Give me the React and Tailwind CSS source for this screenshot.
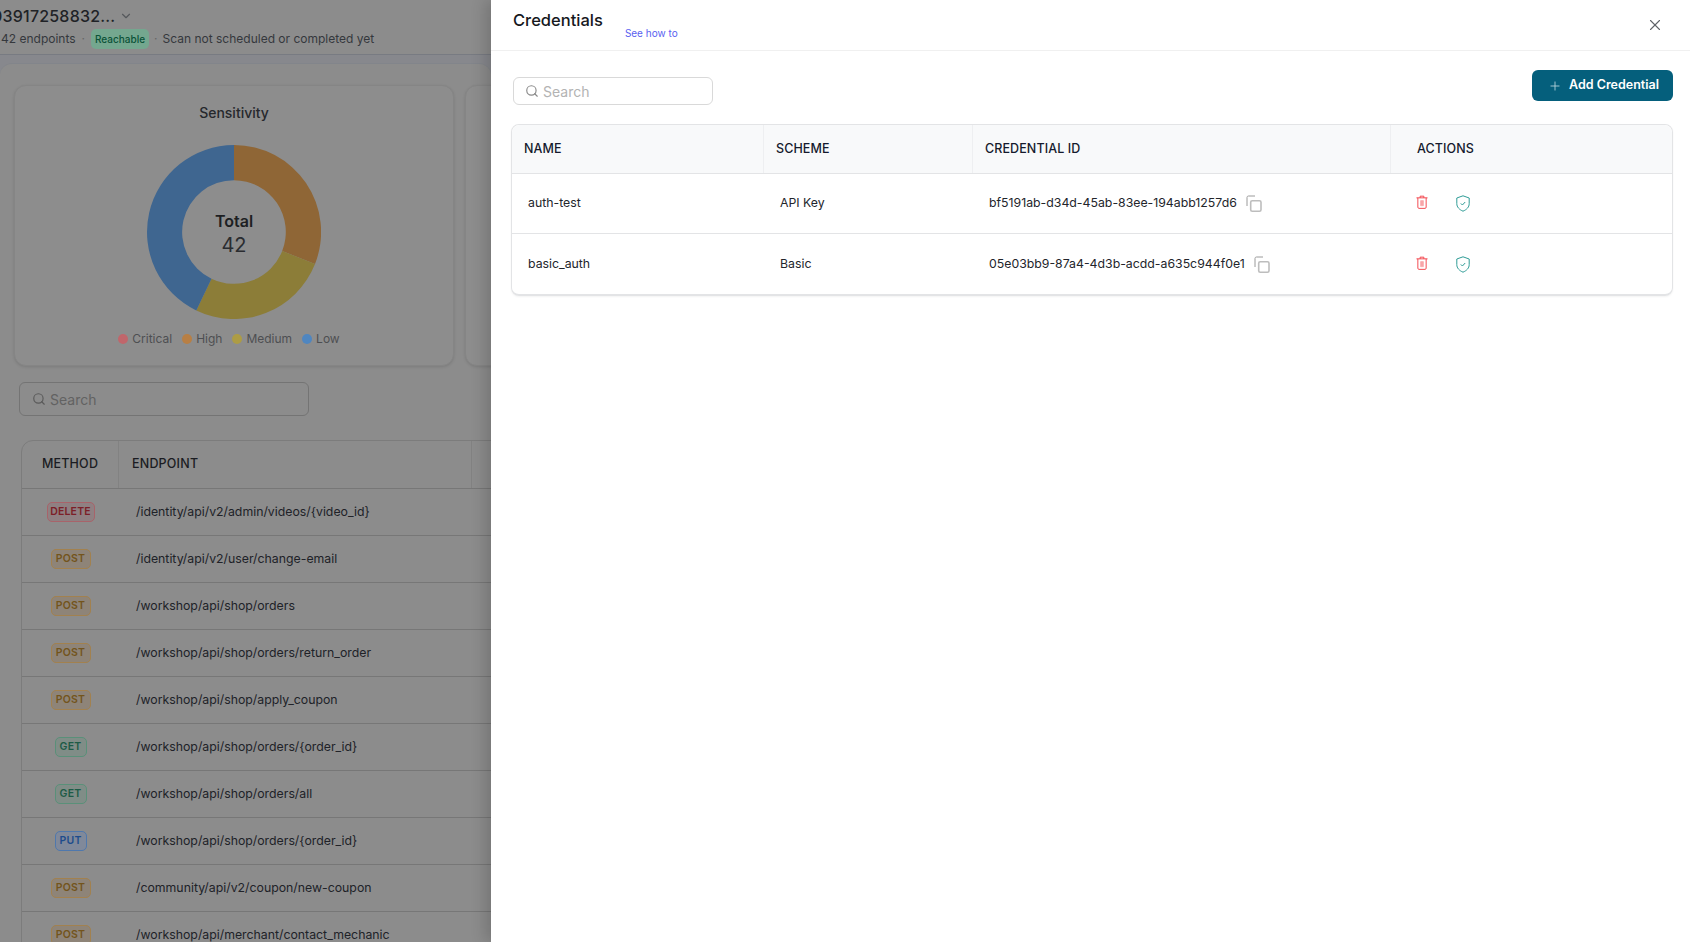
import { ChevronDown, Plus, Search, X } from 'lucide-react'

const ENDPOINTS = [
  ['DELETE', '/identity/api/v2/admin/videos/{video_id}'],
  ['POST', '/identity/api/v2/user/change-email'],
  ['POST', '/workshop/api/shop/orders'],
  ['POST', '/workshop/api/shop/orders/return_order'],
  ['POST', '/workshop/api/shop/apply_coupon'],
  ['GET', '/workshop/api/shop/orders/{order_id}'],
  ['GET', '/workshop/api/shop/orders/all'],
  ['PUT', '/workshop/api/shop/orders/{order_id}'],
  ['POST', '/community/api/v2/coupon/new-coupon'],
  ['POST', '/workshop/api/merchant/contact_mechanic'],
]

const METHOD_STYLES = {
  DELETE: 'w-12 border-[#a8636a] bg-[#8f8082] text-[#7c1f28]',
  POST: 'w-10 border-[#a2814f] bg-[#8e8478] text-[#73541c]',
  GET: 'w-8 border-[#5a9079] bg-[#808d87] text-[#1d5b46]',
  PUT: 'w-8 border-[#4f78ad] bg-[#80899a] text-[#1d4c8c]',
}

const LEGEND = [
  ['Critical', 'bg-[#c0666b]'],
  ['High', 'bg-[#b87f44]'],
  ['Medium', 'bg-[#ad9c44]'],
  ['Low', 'bg-[#4f86c0]'],
]

const CREDENTIALS = [
  ['auth-test', 'API Key', 'bf5191ab-d34d-45ab-83ee-194abb1257d6'],
  ['basic_auth', 'Basic', '05e03bb9-87a4-4d3b-acdd-a635c944f0e1'],
]

function Donut() {
  return (
    <svg width="174" height="174" viewBox="-87 -87 174 174">
      <path d="M0 -87A87 87 0 0 1 81 32L48.2 19A51.8 51.8 0 0 0 0 -51.8Z" fill="#8f6636" />
      <path d="M81 32A87 87 0 0 1 -37.7 78.4L-22.5 46.7A51.8 51.8 0 0 0 48.2 19Z" fill="#8c7d38" />
      <path d="M-37.7 78.4A87 87 0 0 1 0 -87L0 -51.8A51.8 51.8 0 0 0 -22.5 46.7Z" fill="#3f6690" />
    </svg>
  )
}

function ShieldCheck() {
  return (
    <svg width="14" height="17" viewBox="0 0 14 17" fill="none" stroke="#2f9c96" strokeWidth="1">
      <path d="M7 .8 13.200 3v5.600c0 3.600-2.600 6-6.200 7.600C3.400 14.600.8 12.200.8 8.600V3Z" />
      <path d="M4.800 8.400 6.400 10l2.800-3" />
    </svg>
  )
}

function TrashIcon() {
  return (
    <svg width="12" height="14" viewBox="0 0 13 15" fill="none" stroke="#f23d44" strokeWidth="1">
      <path d="M.5 3h12M4.500 3V1.200h4V3" />
      <path d="M2 3v10.200c0 .7.500 1.200 1.200 1.200h6.600c.7 0 1.200-.5 1.200-1.200V3" />
      <path d="M5 6v5.500h3V6Z" fill="#f9a5a8" stroke="#f9a5a8" strokeWidth=".8" />
    </svg>
  )
}

function CopyIcon() {
  return (
    <svg width="17" height="17" viewBox="0 0 17 17" fill="none">
      <path d="M2 11V2.500C2 1.700 2.600 1 3.500 1H10" stroke="#9a9a9a" strokeWidth="1" />
      <rect x="5.700" y="5.700" width="10.300" height="10.500" rx="1.500" stroke="#bdbdbd" strokeWidth="1.600" />
    </svg>
  )
}

function BackgroundPage() {
  return (
    <div className="h-full w-[491px] shrink-0 overflow-hidden bg-[#8c8c8c]">
      <div className="h-[55px] border-b border-[#787b82] whitespace-nowrap">
        <div className="flex items-center gap-1 -ml-[8px] pt-[3px] h-[29px]">
          <span className="text-[16px] leading-[26px] font-medium tracking-[0.2px] text-[#202226]">03917258832...</span>
          <ChevronDown size={14} className="text-[#55585c]" />
        </div>
        <div className="flex items-center pl-[1px] text-[12px] leading-5 text-[#35383d]">
          <span>42 endpoints</span>
          <span className="mx-[6px] text-[#666]">·</span>
          <span className="rounded-[5px] bg-[#74a78f] px-[4px] text-[10px] leading-[20px] font-medium text-[#0b5238]">Reachable</span>
          <span className="mx-[5px] text-[#666]">·</span>
          <span>Scan not scheduled or completed yet</span>
        </div>
      </div>

      <div className="bg-[#87888d] pt-2">
        <div className="rounded-t-xl border-t border-[#82858b] bg-[#8c8c8c] pt-[21px]">
          <div className="flex gap-[11px] pl-[14px] w-[1000px]">
            <div className="flex h-[281px] w-[440px] shrink-0 flex-col items-center rounded-xl border border-[#858585] bg-[#8d8d8d] shadow-[0_1px_3px_rgba(0,0,0,0.12)]">
              <h2 className="mt-[15px] text-[14px] leading-6 font-medium text-[#26282c]">Sensitivity</h2>
              <div className="relative mt-5 h-[174px] w-[174px]">
                <Donut />
                <div className="absolute inset-0 flex flex-col items-center justify-center pt-[2px] text-[#1d1f23]">
                  <span className="text-[16px] leading-6 font-semibold">Total</span>
                  <span className="text-[20px] leading-6 text-[#2a2c30]">42</span>
                </div>
              </div>
              <div className="mt-[10px] mr-[10px] flex items-center gap-[10px] text-[12px] leading-5 text-[#4d4f52]">
                {LEGEND.map(([label, color]) => (
                  <span key={label} className="flex items-center gap-[4px]">
                    <span className={`h-[10px] w-[10px] rounded-full ${color}`} />
                    {label}
                  </span>
                ))}
              </div>
            </div>
            <div className="h-[281px] w-[440px] shrink-0 rounded-xl border border-[#858585] bg-[#8d8d8d] shadow-[0_1px_3px_rgba(0,0,0,0.12)]" />
          </div>

          <div className="ml-[19px] mt-[16px] flex h-[34px] w-[290px] items-center gap-[4px] rounded-md border border-[#747474] px-3 text-[14px] text-[#626262]">
            <Search size={14} className="text-[#5a5a5a]" />
            Search
          </div>

          <div className="ml-[21px] mt-6 w-[700px] rounded-tl-xl border border-[#7c7c7c]">
            <div className="flex h-[48px] border-b border-[#777] text-[12.5px] font-medium tracking-[0.2px] text-[#1b1c22]">
              <div className="flex w-[97px] items-center justify-center border-r border-[#828282]">METHOD</div>
              <div className="flex w-[353px] items-center border-r border-[#828282] pl-[13px]">ENDPOINT</div>
            </div>
            {ENDPOINTS.map(([method, path], i) => (
              <div key={i} className="flex h-[47px] items-center border-b border-[#777]">
                <div className="flex w-[97px] justify-center">
                  <span className={`flex h-5 items-center justify-center rounded-[5px] border text-[10.5px] font-semibold tracking-[0.2px] ${METHOD_STYLES[method]}`}>
                    {method}
                  </span>
                </div>
                <div className="pl-[17px] text-[12.300px] text-[#202228]">{path}</div>
              </div>
            ))}
          </div>
        </div>
      </div>
    </div>
  )
}

function CredentialsPanel() {
  return (
    <div className="relative z-10 h-full flex-1 bg-white shadow-[-6px_0_14px_rgba(0,0,0,0.16)]">
      <div className="flex h-[51px] justify-between border-b border-[#f0f0f0] pl-[22px] pr-[26px]">
        <div className="flex">
          <h1 className="mt-[8px] text-[16.500px] leading-6 font-medium text-[#16181d]">Credentials</h1>
          <a className="mt-[26px] ml-[22px] text-[10px] leading-[15px] text-[#5a5ff0]">See how to</a>
        </div>
        <X size={18} strokeWidth={1.5} className="mt-[16px] text-[#5f6368]" />
      </div>

      <div className="flex justify-between pl-[22px] pr-[17px] pt-[19px]">
        <div className="mt-[7px] flex h-7 w-[200px] items-center gap-[4px] rounded-md border border-[#d9d9d9] px-[11px] text-[14px] text-[#b3b3b3]">
          <Search size={14} className="text-[#8a8a8a]" />
          Search
        </div>
        <button className="flex h-[31px] w-[141px] items-center justify-center gap-[7px] rounded-md bg-[#055f7c] pl-[2px] text-[12.500px] font-semibold text-white">
          <Plus size={14} strokeWidth={1.5} className="text-[#b8d3dc]" />
          Add Credential
        </button>
      </div>

      <div className="ml-5 mr-[17px] mt-[19px] rounded-lg border border-[#e3e4e6] border-b-2 shadow-[0_1px_2px_rgba(0,0,0,0.05)]">
        <div className="grid h-[49px] grid-cols-[252px_209px_418px_1fr] rounded-t-lg border-b border-[#e3e4e6] bg-[#f8f9fa] text-[12.500px] font-medium tracking-[0.1px] text-[#151a2d]">
          <div className="flex items-center border-r border-[#eeeff1] pl-3">NAME</div>
          <div className="flex items-center border-r border-[#eeeff1] pl-3">SCHEME</div>
          <div className="flex items-center border-r border-[#eeeff1] pl-3">CREDENTIAL ID</div>
          <div className="flex items-center pl-[26px]">ACTIONS</div>
        </div>
        {CREDENTIALS.map(([name, scheme, id], i) => (
          <div key={name} className={`grid h-[60px] grid-cols-[252px_209px_418px_1fr] items-center text-[12.300px] text-[#23252b] ${i === 0 ? 'border-b border-[#e3e4e6]' : ''}`}>
            <div className="pl-4">{name}</div>
            <div className="pl-4">{scheme}</div>
            <div className="flex items-center gap-2 pl-4">
              <span>{id}</span>
              <CopyIcon />
            </div>
            <div className="flex items-center gap-[28px] pl-[25px]">
              <span className="-mt-[3px]"><TrashIcon /></span>
              <ShieldCheck />
            </div>
          </div>
        ))}
      </div>
    </div>
  )
}

export default function App() {
  return (
    <div className="flex h-screen w-full overflow-hidden font-[Inter,sans-serif]">
      <BackgroundPage />
      <CredentialsPanel />
    </div>
  )
}
